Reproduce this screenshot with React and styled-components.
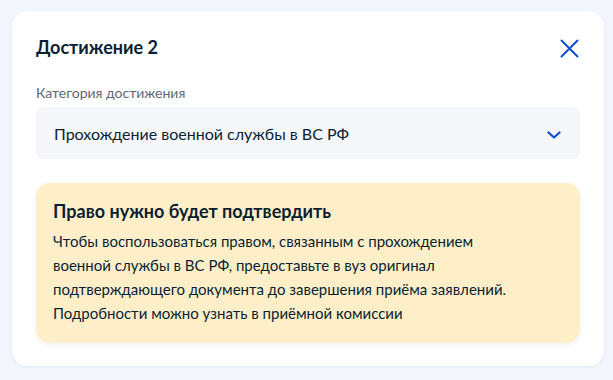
import React from "react";
import styled, { createGlobalStyle } from "styled-components";

const Global = createGlobalStyle`
  html, body { margin: 0; padding: 0; background: #f3f6fc; }
  body { font-family: Lato, "Noto Sans", sans-serif; color: #0b1f33; }
  * { box-sizing: border-box; }
`;

const Page = styled.div`
  padding: 11px 9px 14px 12px;
  width: 613px;
  min-height: 380px;
`;

const Card = styled.section`
  background: #ffffff;
  border-radius: 16px;
  box-shadow: 0 1px 4px rgba(11, 31, 51, 0.06);
  padding: 23px 24px 23px 24px;
  width: 592px;
  display: flex;
  flex-direction: column;
`;

const Header = styled.div`
  display: flex;
  align-items: center;
  justify-content: space-between;
  height: 26px;
`;

const Title = styled.h2`
  margin: 0;
  font-size: 18px;
  font-weight: 700;
  line-height: 26px;
  color: #0b1f33;
`;

const CloseButton = styled.button`
  border: 0;
  background: none;
  padding: 0;
  width: 24px;
  height: 24px;
  margin-right: -1px;
  margin-top: 2px;
  display: flex;
  align-items: center;
  justify-content: center;
  cursor: pointer;
`;

const Label = styled.div`
  margin-top: 23px;
  font-size: 14px;
  line-height: 20px;
  color: #5d6873;
`;

const Select = styled.div`
  margin-top: 4px;
  height: 52px;
  background: #f5f7fa;
  border-radius: 6px;
  display: flex;
  align-items: center;
  justify-content: space-between;
  padding: 0 19px 0 18px;
  font-size: 16px;
  color: #0b1f33;
`;

const Chevron = styled.svg`
  margin-top: 4px;
`;

const Alert = styled.div`
  margin-top: 24px;
  background: #feefc9;
  border-radius: 14px;
  box-shadow: 0 2px 6px rgba(11, 31, 51, 0.06);
  padding: 16px 18px 18px 17px;
`;

const AlertTitle = styled.div`
  font-size: 18px;
  font-weight: 700;
  line-height: 24px;
  color: #0b1f33;
`;

const AlertText = styled.p`
  margin: 6px 0 0;
  font-size: 15px;
  line-height: 24px;
  color: #0b1f33;
`;

export default function App() {
  return (
    <>
      <Global />
      <Page>
        <Card>
          <Header>
            <Title>Достижение 2</Title>
            <CloseButton aria-label="Закрыть">
              <svg width="19" height="19" viewBox="0 0 19 19" fill="none">
                <path d="M1.5 1.5L17.5 17.5M17.5 1.5L1.5 17.5" stroke="#0d4cd3" strokeWidth="2" strokeLinecap="round" />
              </svg>
            </CloseButton>
          </Header>
          <Label>Категория достижения</Label>
          <Select>
            <span>Прохождение военной службы в ВС РФ</span>
            <Chevron width="14" height="8" viewBox="0 0 14 8" fill="none">
              <path d="M1.5 1.5L7 6.5L12.5 1.5" stroke="#0d4cd3" strokeWidth="2.2" strokeLinecap="round" strokeLinejoin="round" />
            </Chevron>
          </Select>
          <Alert>
            <AlertTitle>Право нужно будет подтвердить</AlertTitle>
            <AlertText>
              Чтобы воспользоваться правом, связанным с прохождением
              <br />
              военной службы в ВС РФ, предоставьте в вуз оригинал
              <br />
              подтверждающего документа до завершения приёма заявлений.
              <br />
              Подробности можно узнать в приёмной комиссии
            </AlertText>
          </Alert>
        </Card>
      </Page>
    </>
  );
}
